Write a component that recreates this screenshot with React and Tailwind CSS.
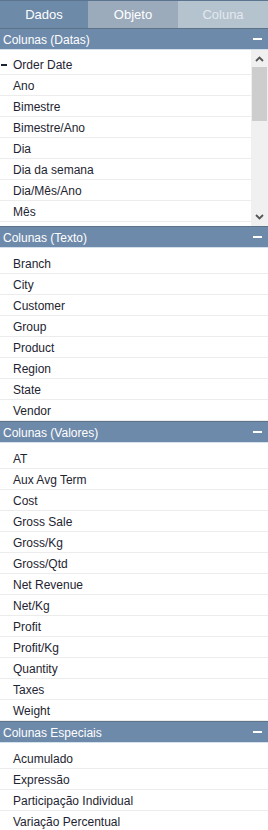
import React from "react";

const sections = [
  {
    title: "Colunas (Datas)",
    scroll: true,
    items: ["Order Date", "Ano", "Bimestre", "Bimestre/Ano", "Dia", "Dia da semana", "Dia/Mês/Ano", "Mês"],
  },
  {
    title: "Colunas (Texto)",
    items: ["Branch", "City", "Customer", "Group", "Product", "Region", "State", "Vendor"],
  },
  {
    title: "Colunas (Valores)",
    items: [
      "AT",
      "Aux Avg Term",
      "Cost",
      "Gross Sale",
      "Gross/Kg",
      "Gross/Qtd",
      "Net Revenue",
      "Net/Kg",
      "Profit",
      "Profit/Kg",
      "Quantity",
      "Taxes",
      "Weight",
    ],
  },
  {
    title: "Colunas Especiais",
    items: ["Acumulado", "Expressão", "Participação Individual", "Variação Percentual"],
  },
];

const Header = ({ title }) => (
  <div className="h-[22px] flex items-center justify-between bg-[#6e8aaa] border-t border-[#5d7388] border-b border-b-[#d4e0ec] pl-[3px] pr-[6px] text-white text-[12px]">
    <span className="pt-[1px]">{title}</span>
    <span className="w-[9px] h-[2px] bg-white" />
  </div>
);

const Row = ({ label, first, scroll }) => (
  <div
    className={
      "h-[21px] flex items-center border-b border-[#ececec] text-[12px] text-[#1e2431] relative " +
      (scroll ? "w-[251px]" : "w-full")
    }
  >
    {first && <span className="absolute left-[1px] top-[10px] w-[6px] h-[2px] bg-[#1e2431]" />}
    <span className="pl-[13px] pt-[2px]">{label}</span>
  </div>
);

const Scrollbar = () => (
  <div className="w-[17px] h-full bg-[#f0f0f0] flex flex-col items-center">
    <svg width="17" height="17" viewBox="0 0 17 17" className="shrink-0">
      <path d="M5 11 L8.5 7.5 L12 11" stroke="#555" strokeWidth="1.8" fill="none" />
    </svg>
    <div className="w-[15px] h-[54px] bg-[#cdcdcd]" />
    <div className="flex-1" />
    <svg width="17" height="17" viewBox="0 0 17 17" className="shrink-0">
      <path d="M5 6 L8.5 9.5 L12 6" stroke="#555" strokeWidth="1.8" fill="none" />
    </svg>
  </div>
);

export default function App() {
  return (
    <div
      className="w-[268px] h-[830px] overflow-hidden bg-white"
      style={{ fontFamily: '"Liberation Sans", Arial, sans-serif' }}
    >
      <div className="flex h-[28px] border-t border-[#5b7590] text-[13px]">
        <div className="w-[88px] flex items-center justify-center bg-[#6e8aa9] text-white">Dados</div>
        <div className="w-[90px] flex items-center justify-center bg-[#9babbc] text-white">Objeto</div>
        <div className="flex-1 flex items-center justify-center bg-[#b5c3cf] text-[#e2e8ee]">Coluna</div>
      </div>

      {sections.map((s) => (
        <div key={s.title}>
          <Header title={s.title} />
          {s.scroll ? (
            <div className="h-[176px] flex overflow-hidden">
              <div className="flex-1 pt-[4px] overflow-hidden">
                {s.items.map((it, i) => (
                  <Row key={it} label={it} first={i === 0} scroll />
                ))}
              </div>
              <Scrollbar />
            </div>
          ) : (
            <div className="pt-[5px]">
              {s.items.map((it) => (
                <Row key={it} label={it} />
              ))}
            </div>
          )}
        </div>
      ))}
    </div>
  );
}
